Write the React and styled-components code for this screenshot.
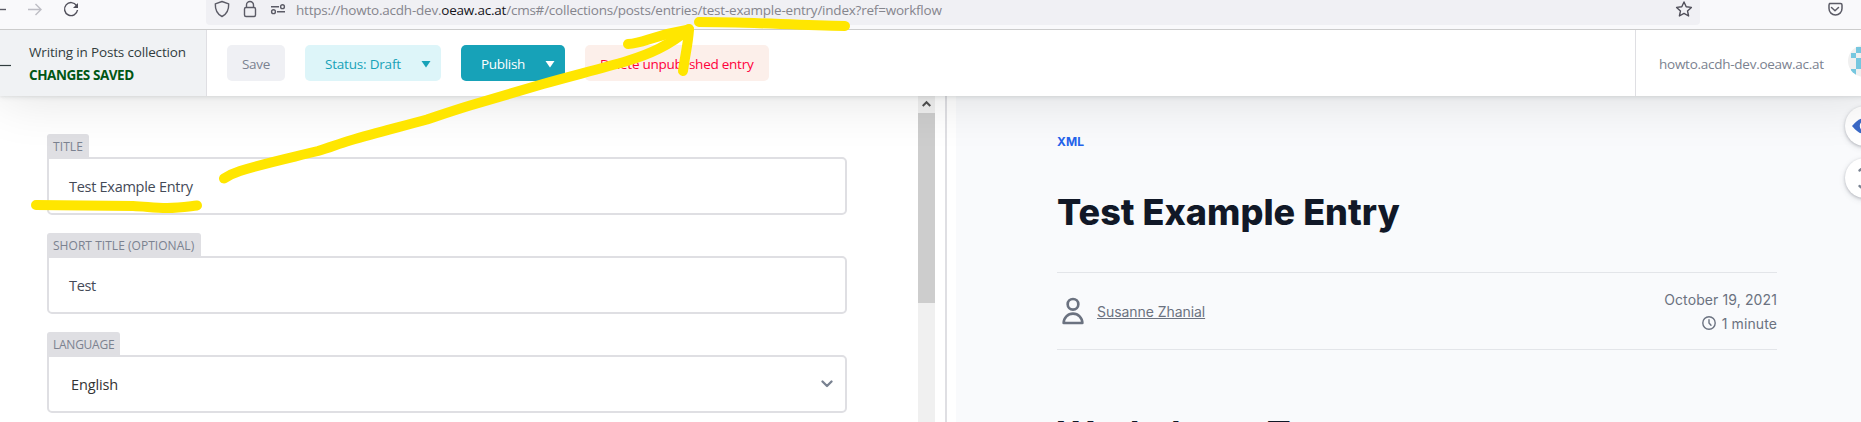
import React from "react";
import styled, { createGlobalStyle } from "styled-components";

const Global = createGlobalStyle`
  * { box-sizing: border-box; }
  html, body { margin: 0; overflow: hidden; background: #fff; }
  svg { display: block; flex: none; }
`;

const ui = `"Open Sans", "Noto Sans", sans-serif`;

const Page = styled.div`
  position: relative;
  width: 1861px;
  height: 422px;
  overflow: hidden;
  display: flex;
  flex-direction: column;
  font-family: ${ui};
`;

const BrowserBar = styled.div`
  position: relative;
  z-index: 3;
  height: 30px;
  flex: none;
  display: flex;
  align-items: flex-start;
  background: #f9f9fb;
  border-bottom: 1px solid #ccc;
`;

const NavButtons = styled.div`
  width: 206px;
  display: flex;
`;

const AddressBar = styled.div`
  width: 1494px;
  height: 25px;
  display: flex;
  background: #f0f0f4;
  border-radius: 0 0 4px 4px;
`;

const Url = styled.div`
  flex: 1;
  padding-left: 5px;
  font-size: 13.5px;
  line-height: 20px;
  letter-spacing: ${(p) => p.$tracking}px;
  white-space: nowrap;
  color: #85858d;
  b { font-weight: 400; color: #15141a; }
`;

const Toolbar = styled.header`
  position: relative;
  z-index: 2;
  height: 66px;
  width: 1880px;
  flex: none;
  display: flex;
  background: #fff;
  box-shadow: 0 2px 6px rgba(68, 74, 87, 0.05), 0 1px 3px rgba(68, 74, 87, 0.1), 0 2px 54px rgba(0, 0, 0, 0.12);
`;

const Back = styled.div`
  width: 207px;
  flex: none;
  display: flex;
  background: #f0f2f4;
  border-right: 1px solid #dfdfe3;
`;

const BackText = styled.div`
  padding: 11px 0 0 18px;
`;

const Label = styled.div`
  font-family: ${ui};
  font-size: ${(p) => p.$size || 13.5}px;
  font-weight: ${(p) => p.$weight || 400};
  line-height: ${(p) => p.$line || 23}px;
  letter-spacing: ${(p) => p.$tracking || 0}px;
  color: ${(p) => p.$color};
  white-space: nowrap;
`;

const Actions = styled.div`
  flex: 1;
  display: flex;
  gap: 20px;
  padding: 15px 0 0 20px;
`;

const Button = styled.div`
  width: ${(p) => p.$width}px;
  height: 36px;
  flex: none;
  display: flex;
  align-items: center;
  padding: 2px 10px 0 ${(p) => p.$inset}px;
  justify-content: space-between;
  border-radius: 5px;
  background: ${(p) => p.$bg};
`;

const Site = styled.div`
  width: 245px;
  flex: none;
  display: flex;
  border-left: 1px solid #dfdfe3;
  padding: 15px 0 0 23px;
`;

const Avatar = styled.div`
  width: 32px;
  height: 32px;
  margin-left: auto;
  border-radius: 50%;
  overflow: hidden;
  background: #f0f0f0;
`;

const Workspace = styled.main`
  flex: 1;
  min-height: 0;
  display: flex;
`;

const Editor = styled.section`
  width: 918px;
  flex: none;
  padding: 38px 0 0 47px;
  display: flex;
  flex-direction: column;
  gap: 18px;
`;

const Field = styled.div`
  height: 81px;
  flex: none;
`;

const FieldLabel = styled.div`
  width: ${(p) => p.$width}px;
  height: 23px;
  padding-left: 6px;
  border-radius: 3px 3px 0 0;
  background: #dfdfe3;
`;

const Input = styled.div`
  width: 800px;
  height: 58px;
  display: flex;
  align-items: center;
  justify-content: space-between;
  padding: 0 12px 0 ${(p) => p.$inset || 20}px;
  border: 2px solid #dfdfe3;
  border-radius: 0 5px 5px 5px;
  background: #fff;
`;

const Scrollbar = styled.div`
  width: 17px;
  flex: none;
  background: #f0f0f0;
`;

const ScrollArrow = styled.div`
  height: 17px;
  padding: 4px 0 0 4px;
`;

const ScrollThumb = styled.div`
  height: 190px;
  background: #cdcdcd;
`;

const Divider = styled.div`
  width: 21px;
  flex: none;
  padding-left: 10px;
  &::before { content: ""; display: block; width: 2px; height: 100%; background: #dfdfe3; }
`;

const Preview = styled.section`
  width: 905px;
  flex: none;
  padding: 36px 0 0 101px;
  background: #f9fafc;
  font-family: Inter, sans-serif;
`;

const Tag = styled.div`
  font-size: 12px;
  line-height: 20px;
  font-weight: 700;
  letter-spacing: 0.1px;
  color: #2563eb;
`;

const Title = styled.h1`
  margin: 38px 0 37px;
  font-size: 36px;
  line-height: 45px;
  font-weight: 800;
  letter-spacing: 0.02px;
  white-space: nowrap;
  color: #111827;
`;

const Meta = styled.div`
  width: 720px;
  height: 78px;
  padding-top: 2px;
  display: flex;
  align-items: center;
  justify-content: space-between;
  border: solid #e3e5e9;
  border-width: 1px 0;
  font-size: 14px;
  line-height: 24px;
  color: #6b7280;
`;

const Author = styled.div`
  display: flex;
  align-items: center;
  gap: 8px;
  letter-spacing: -0.06px;
  svg { margin-top: -2px; }
  a { text-decoration: underline; }
`;

const Dates = styled.div`
  display: flex;
  flex-direction: column;
  align-items: flex-end;
  letter-spacing: 0.11px;
  > div { display: flex; align-items: center; gap: 6px; }
  svg { margin-top: -2px; }
`;

const Heading = styled.h2`
  margin: 64px 0 0;
  font-size: 36px;
  line-height: 40px;
  font-weight: 700;
  white-space: nowrap;
  color: #111827;
`;

const FloatingButtons = styled.div`
  position: absolute;
  z-index: 1;
  left: 1845px;
  top: 106px;
  display: flex;
  flex-direction: column;
  gap: 12px;
`;

const RoundButton = styled.div`
  width: 40px;
  height: 40px;
  display: flex;
  align-items: center;
  justify-content: center;
  border-radius: 50%;
  background: #fff;
  box-shadow: 0 2px 6px rgba(68, 74, 87, 0.15), 0 1px 3px rgba(68, 74, 87, 0.3);
`;

const Marker = styled.svg`
  position: absolute;
  z-index: 4;
  left: 0;
  top: 0;
  fill: none;
  stroke: #ffe600;
  stroke-width: 10;
  stroke-linecap: round;
  stroke-linejoin: round;
`;

const Caret = ({ color }) => (
  <svg width="10" height="7"><path d="M.5 0h9L5 6.5z" fill={color} /></svg>
);

const fields = [
  { label: "TITLE", width: 42, value: "Test Example Entry", tl: 0.1, tv: -0.28 },
  { label: "SHORT TITLE (OPTIONAL)", width: 154, value: "Test", tl: 0.04, tv: -0.35 },
  { label: "LANGUAGE", width: 73, value: "English", tl: -0.25, tv: -0.12, select: true },
];

export default function App() {
  return (
    <Page>
      <Global />
      <BrowserBar>
        <NavButtons>
          <svg width="206" height="25" fill="none" strokeWidth="1.4">
            <path d="M-5 9.5H6" stroke="#5b5b66" />
            <path d="M28 9.5h13M35.5 4l5.5 5.5-5.5 5.5" stroke="#bdbdc4" />
            <path d="M76.5 5.5A6.5 6.5 0 1 0 77.5 10" stroke="#4f4e59" />
            <path d="M78 3v5h-5z" fill="#4f4e59" />
          </svg>
        </NavButtons>
        <AddressBar>
          <svg width="85" height="25" fill="none" stroke="#5b5b66" strokeWidth="1.4">
            <path d="M16 1.5l6.7 2.3c.2 6-2 10.5-6.7 12.7-4.7-2.2-6.9-6.7-6.7-12.7z" strokeLinejoin="round" />
            <rect x="38.5" y="7.5" width="11" height="9" rx="1.5" />
            <path d="M40.5 7.5V5a3.5 3.5 0 0 1 7 0v2.5" />
            <path d="M65 6.7h8M71 11.7h8" />
            <circle cx="76.5" cy="6.7" r="1.9" />
            <circle cx="67.5" cy="11.7" r="1.9" />
          </svg>
          <Url $tracking={-0.22}>https://howto.acdh-dev.<b>oeaw.ac.at</b>/cms#/collections/posts/entries/test-example-entry/index?ref=workflow</Url>
          <svg width="32" height="25" fill="none" stroke="#4f4e59" strokeWidth="1.4" strokeLinejoin="round">
            <path d="M16 2l2.2 4.8 5.2.6-3.9 3.5 1.1 5.1L16 13.4 11.4 16l1.1-5.1-3.9-3.5 5.2-.6z" />
          </svg>
        </AddressBar>
        <svg width="161" height="25" fill="none" stroke="#5b5b66" strokeWidth="1.5" strokeLinecap="round" strokeLinejoin="round">
          <path d="M129.5 3.5h11a1.5 1.5 0 0 1 1.5 1.5v3.5a6.5 6.5 0 0 1-13 0V5a1.5 1.5 0 0 1 1.5-1.5zM131.500 7.5l3.5 3.3 3.5-3.3" />
        </svg>
      </BrowserBar>

      <Toolbar>
        <Back>
          <svg width="11" height="66"><path d="M0 35.5h11" stroke="#313d3e" strokeWidth="1.2" /></svg>
          <BackText>
            <Label $color="#313d3e" $tracking={-0.17}>Writing in Posts collection</Label>
            <Label $color="#005614" $weight={700} $tracking={-0.45}>CHANGES SAVED</Label>
          </BackText>
        </Back>
        <Actions>
          <Button $width={58} $inset={15} $bg="#eff0f4"><Label $color="#7b8290" $tracking={-0.3}>Save</Label></Button>
          <Button $width={136} $inset={20} $bg="#ddf5f9"><Label $color="#17a2b8" $tracking={-0.2}>Status: Draft</Label><Caret color="#17a2b8" /></Button>
          <Button $width={104} $inset={20} $bg="#17a2b8"><Label $color="#fff" $tracking={-0.3}>Publish</Label><Caret color="#fff" /></Button>
          <Button $width={184} $inset={15} $bg="#fcefea"><Label $color="#ff003b" $tracking={-0.25}>Delete unpublished entry</Label></Button>
        </Actions>
        <Site>
          <Label $color="#7b8290" $line={39} $tracking={-0.26}>howto.acdh-dev.oeaw.ac.at</Label>
          <Avatar>
            <svg width="32" height="32" fill="#76c7df">
              <path d="M8 2h8v6H8zM3 8h5v5H3zM8 13h8v11H8zM3 24h5v6H3z" />
            </svg>
          </Avatar>
        </Site>
      </Toolbar>

      <Workspace>
        <Editor>
          {fields.map((f) => (
            <Field key={f.label}>
              <FieldLabel $width={f.width}>
                <Label $size={12} $line={25} $color="#7b8290" $tracking={f.tl}>{f.label}</Label>
              </FieldLabel>
              <Input $inset={f.select ? 22 : 20}>
                <Label $size={14.5} $color={f.select ? "#333" : "#444a57"} $tracking={f.tv}>{f.value}</Label>
                {f.select && (
                  <svg width="12" height="8" fill="none" stroke="#798291" strokeWidth="2.3" strokeLinecap="round" strokeLinejoin="round">
                    <path d="M1.5 1.5L6 6l4.5-4.5" />
                  </svg>
                )}
              </Input>
            </Field>
          ))}
        </Editor>
        <Scrollbar>
          <ScrollArrow>
            <svg width="9" height="8" fill="none" stroke="#505050" strokeWidth="2"><path d="M.7 6L4.5 2.2 8.3 6" /></svg>
          </ScrollArrow>
          <ScrollThumb />
        </Scrollbar>
        <Divider />
        <Preview>
          <Tag>XML</Tag>
          <Title>Test Example Entry</Title>
          <Meta>
            <Author>
              <svg width="32" height="32" viewBox="0 0 24 24" fill="none" stroke="#6b7280" strokeWidth="2" strokeLinejoin="round">
                <circle cx="12" cy="7" r="4" />
                <path d="M12 14a7 7 0 0 0-7 7h14a7 7 0 0 0-7-7z" />
              </svg>
              <a>Susanne Zhanial</a>
            </Author>
            <Dates>
              <div>October 19, 2021</div>
              <div>
                <svg width="14" height="14" fill="none" stroke="#6b7280" strokeWidth="1.4" strokeLinecap="round">
                  <circle cx="7" cy="7" r="6.2" />
                  <path d="M7 3.8V7l2 2.3" />
                </svg>
                1 minute
              </div>
            </Dates>
          </Meta>
          <Heading>Workshops Test</Heading>
        </Preview>
      </Workspace>

      <FloatingButtons>
        <RoundButton>
          <svg width="26" height="18"><path d="M0 9Q13-7 26 9 13 25 0 9z" fill="#3a69c7" /><circle cx="13" cy="9" r="4.5" fill="none" stroke="#fff" strokeWidth="1.5" /></svg>
        </RoundButton>
        <RoundButton>
          <svg width="16" height="28" fill="none" stroke="#798291" strokeWidth="2.3" strokeLinecap="round" strokeLinejoin="round"><path d="M2.5 6.5L8 2l5.5 4.5M2.5 22L8 26.5l5.5-4.5" /></svg>
        </RoundButton>
      </FloatingButtons>

      <Marker width="1861" height="422">
        <path d="M36 205L133 206C146 206.500 154 208 167 208C180 208 188 206.500 197 205.500" />
        <path d="M224 178.500Q232 173.500 240 171C265 163 292 157.500 318 151C330 147.500 338 144 350 140.500C376 132.500 402 126.500 427 119.500C442 114.500 455 110 470 105.500C495 98 519 91 543 84C571 76 600 69 627 61C650 54 668 46 689 29" />
        <path d="M628 44C645 43 650 36 689 29.500C688 45 685 55 683 71" />
        <path d="M699 22C750 22 790 25 845 26" />
      </Marker>
    </Page>
  );
}
